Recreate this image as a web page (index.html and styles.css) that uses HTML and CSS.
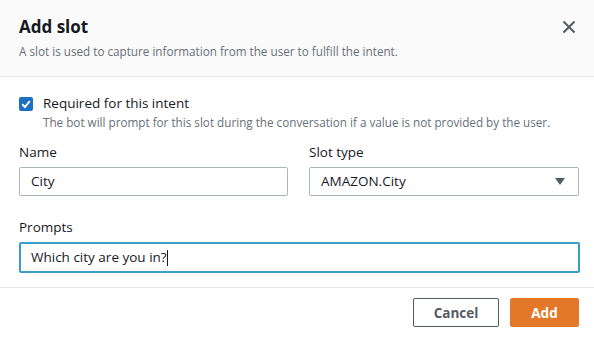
FILE: index.html
```html
<!DOCTYPE html>
<html>
<head>
<meta charset="utf-8">
<link rel="stylesheet" href="styles.css">
</head>
<body>
<div class="modal">
  <header class="head">
    <div class="head-text">
      <h1 class="title">Add slot</h1>
      <p class="subtitle">A slot is used to capture information from the user to fulfill the intent.</p>
    </div>
    <button class="close" aria-label="Close">
      <svg width="14" height="14" viewBox="0 0 14 14"><path d="M1.5 1.5 L12.5 12.5 M12.5 1.5 L1.5 12.5" stroke="#545b64" stroke-width="2" fill="none"/></svg>
    </button>
  </header>
  <section class="body">
    <div class="check-row">
      <span class="checkbox">
        <svg width="14" height="14" viewBox="0 0 14 14"><path d="M3.2 7.2 L6 10 L10.8 4" stroke="#fff" stroke-width="2" fill="none"/></svg>
      </span>
      <div class="check-text">
        <div class="check-label">Required for this intent</div>
        <div class="check-desc">The bot will prompt for this slot during the conversation if a value is not provided by the user.</div>
      </div>
    </div>
    <div class="grid">
      <div class="field">
        <label class="label">Name</label>
        <div class="input">City</div>
      </div>
      <div class="field">
        <label class="label">Slot type</label>
        <div class="input select">AMAZON.City
          <svg class="caret" width="10" height="8" viewBox="0 0 10 8"><path d="M0 0 H10 L5 7 Z" fill="#545b64"/></svg>
        </div>
      </div>
    </div>
    <div class="field prompts">
      <label class="label">Prompts</label>
      <div class="input focus">Which city are you in?<span class="cursor"></span></div>
    </div>
  </section>
  <footer class="foot">
    <button class="btn cancel">Cancel</button>
    <button class="btn add">Add</button>
  </footer>
</div>
</body>
</html>
```
FILE: styles.css
```css
* { box-sizing: border-box; }
body {
  margin: 0;
  background: #fff;
  font-family: "Open Sans", "Noto Sans", sans-serif;
  color: #16191f;
}
.modal { width: 594px; height: 338px; display: flex; flex-direction: column; }
.head {
  background: #fafafa;
  border-bottom: 1px solid #e5e7e7;
  height: 77px;
  display: flex;
  justify-content: space-between;
  padding: 15px 17px 0 19px;
}
.title { margin: 0; font-size: 17px; font-weight: 700; line-height: 24px; }
.subtitle { margin: 5px 0 0; font-size: 11.7px; color: #687078; line-height: 15px; }
.close { background: none; border: 0; padding: 0; width: 16px; height: 16px; margin-top: 4px; display: flex; align-items: center; justify-content: center; }
.body { padding: 17px 15px 0 19px; }
.check-row { display: flex; gap: 10px; }
.checkbox {
  width: 14px; height: 14px; background: #1f6fc0; border-radius: 2px;
  display: flex; align-items: center; justify-content: center; margin-top: 3px;
}
.check-label { font-size: 13.5px; line-height: 18px; }
.check-desc { font-size: 11.7px; color: #687078; line-height: 15px; margin-top: 3px; }
.grid { display: grid; grid-template-columns: 269px 270px; column-gap: 21px; margin-top: 13px; }
.field { display: flex; flex-direction: column; }
.label { font-size: 13.5px; line-height: 18px; margin-bottom: 6px; }
.input {
  height: 29px; border: 1px solid #aab7b8; border-radius: 2px;
  font-size: 13.5px; line-height: 27px; padding: 0 11px;
  display: flex; align-items: center; justify-content: space-between;
}
.select { padding-right: 13px; }
.prompts { margin-top: 22px; width: 561px; }
.focus { border: 2px solid #3a9fc8; padding: 0 10px; justify-content: flex-start; height: 31px; }
.cursor { width: 1px; height: 16px; background: #16191f; }
.foot {
  margin-top: 14px;
  border-top: 1px solid #e5e7e7;
  display: flex; justify-content: flex-end; gap: 11px;
  padding: 10px 15px 0 0;
}
.btn {
  height: 29px; border-radius: 2px; font-family: inherit; font-size: 13.5px; font-weight: 700; padding: 0;
}
.cancel { width: 86px; background: #fff; border: 1px solid #545b64; color: #545b64; }
.add { width: 69px; background: #e4782a; border: 1px solid #e4782a; color: #fff; }
```
